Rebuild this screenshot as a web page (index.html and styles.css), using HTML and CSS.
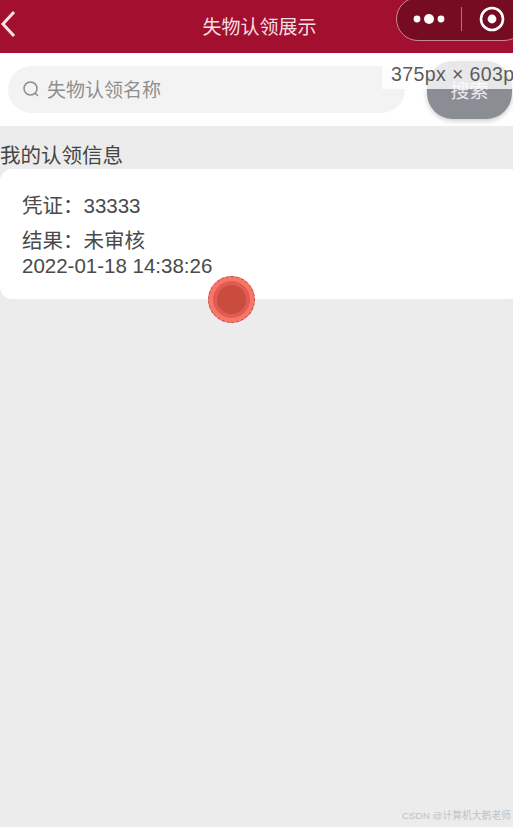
FILE: index.html
```html
<!DOCTYPE html>
<html lang="en">
<head>
    <meta charset="UTF-8">
    <meta name="viewport" content="width=device-width, initial-scale=1.0">
    <title>失物认领展示</title>
    <link rel="stylesheet" href="styles.css">
</head>
<body>
    <header class="navbar">
        <svg class="back-icon" width="16" height="28" viewBox="0 0 16 28">
            <path d="M14 2 L3 14 L14 26" fill="none" stroke="#f7e4e8" stroke-width="3"/>
        </svg>
        <span class="nav-title">失物认领展示</span>
        <div class="capsule">
            <svg width="36" height="14" viewBox="0 0 36 14">
                <circle cx="5" cy="7" r="3.4" fill="#fff"/>
                <circle cx="17" cy="7" r="5" fill="#fff"/>
                <circle cx="29" cy="7" r="3.4" fill="#fff"/>
            </svg>
            <span class="capsule-line"></span>
            <svg width="28" height="28" viewBox="0 0 28 28">
                <circle cx="14" cy="14" r="11" fill="none" stroke="#fff" stroke-width="2.6"/>
                <circle cx="14" cy="14" r="4.4" fill="#fff"/>
            </svg>
        </div>
    </header>

    <div class="search-bar">
        <div class="search-input">
            <svg width="18" height="18" viewBox="0 0 18 18">
                <circle cx="8.5" cy="8.5" r="6.5" fill="none" stroke="#8c8c8c" stroke-width="1.5"/>
                <path d="M13 13 L16 16" stroke="#8c8c8c" stroke-width="1.5"/>
            </svg>
            <span>失物认领名称</span>
        </div>
        <button class="search-btn">搜索</button>
        <div class="size-tip">375px × 603px</div>
    </div>

    <h3 class="section-title">我的认领信息</h3>
    <div class="card">
        <p class="row">凭证：33333</p>
        <p class="row">结果：未审核</p>
        <p class="time">2022-01-18 14:38:26</p>
        <div class="touch-dot"><span></span></div>
    </div>

    <div class="watermark">CSDN @计算机大鹅老师</div>
</body>
</html>
```

FILE: styles.css
```css
* {
    box-sizing: border-box;
}
html, body {
    margin: 0;
    height: 827px;
    overflow: hidden;
}
body {
    position: relative;
    font-family: "Liberation Sans", "Noto Sans CJK SC", sans-serif;
    background-color: #ececec;
    color: #4a4a4a;
}
.navbar {
    position: relative;
    display: flex;
    align-items: center;
    justify-content: center;
    height: 53px;
    padding-bottom: 3px;
    background-color: #a3102f;
}
.back-icon {
    position: absolute;
    left: 0;
    top: 10px;
}
.nav-title {
    color: #f5dfe3;
    font-size: 19px;
    margin-left: 6px;
}
.capsule {
    position: absolute;
    left: 396px;
    top: -3px;
    width: 130px;
    height: 44px;
    display: flex;
    align-items: center;
    padding-left: 15px;
    gap: 13px;
    background-color: #750c22;
    border: 1px solid #c98896;
    border-radius: 22px;
}
.capsule-line {
    width: 1px;
    height: 24px;
    background-color: #b5707f;
}
.capsule-line + svg {
    margin-left: 3px;
}
.search-bar {
    position: relative;
    display: flex;
    align-items: center;
    height: 73px;
    padding-left: 8px;
    background-color: #fff;
}
.search-input {
    display: flex;
    align-items: center;
    gap: 7px;
    width: 397px;
    height: 47px;
    padding: 0 0 2px 14px;
    border-radius: 24px;
    background-color: #f3f3f3;
    color: #8f8f8f;
    font-size: 19px;
}
.search-btn {
    width: 85px;
    height: 58px;
    margin: 0 0 0 22px;
    padding: 0;
    border: none;
    border-radius: 26px;
    background-color: #8b8d95;
    color: #e8e8ea;
    font-family: inherit;
    font-size: 19px;
    box-shadow: 0 2px 5px rgba(0, 0, 0, 0.2);
}
.size-tip {
    position: absolute;
    left: 382px;
    top: 7px;
    width: 131px;
    height: 29px;
    padding-left: 9px;
    line-height: 28px;
    font-size: 19.5px;
    letter-spacing: 0.4px;
    white-space: nowrap;
    overflow: hidden;
    color: #5c5c5c;
    background-color: rgba(255, 255, 255, 0.8);
}
.section-title {
    margin: 0;
    height: 43px;
    padding-top: 17px;
    font-size: 20.5px;
    font-weight: normal;
    line-height: 26px;
    color: #444;
}
.card {
    position: relative;
    width: 520px;
    height: 130px;
    padding: 24px 0 0 22px;
    border-radius: 12px;
    background-color: #fff;
    font-size: 20.5px;
}
.row {
    margin: 0 0 10px;
    line-height: 25px;
}
.time {
    margin: -10px 0 0;
    line-height: 25px;
}
.touch-dot {
    position: absolute;
    left: 208px;
    top: 107px;
    width: 47px;
    height: 47px;
    display: flex;
    align-items: center;
    justify-content: center;
    border-radius: 50%;
    border: 1px dashed #b5483e;
    background-color: #f97569;
}
.touch-dot span {
    width: 29px;
    height: 29px;
    border-radius: 50%;
    background-color: #c94c3f;
    box-shadow: 0 0 0 4px #e05c50;
}
.watermark {
    position: absolute;
    right: 2px;
    bottom: 5px;
    font-size: 9.8px;
    color: #c2c2c2;
}
```
